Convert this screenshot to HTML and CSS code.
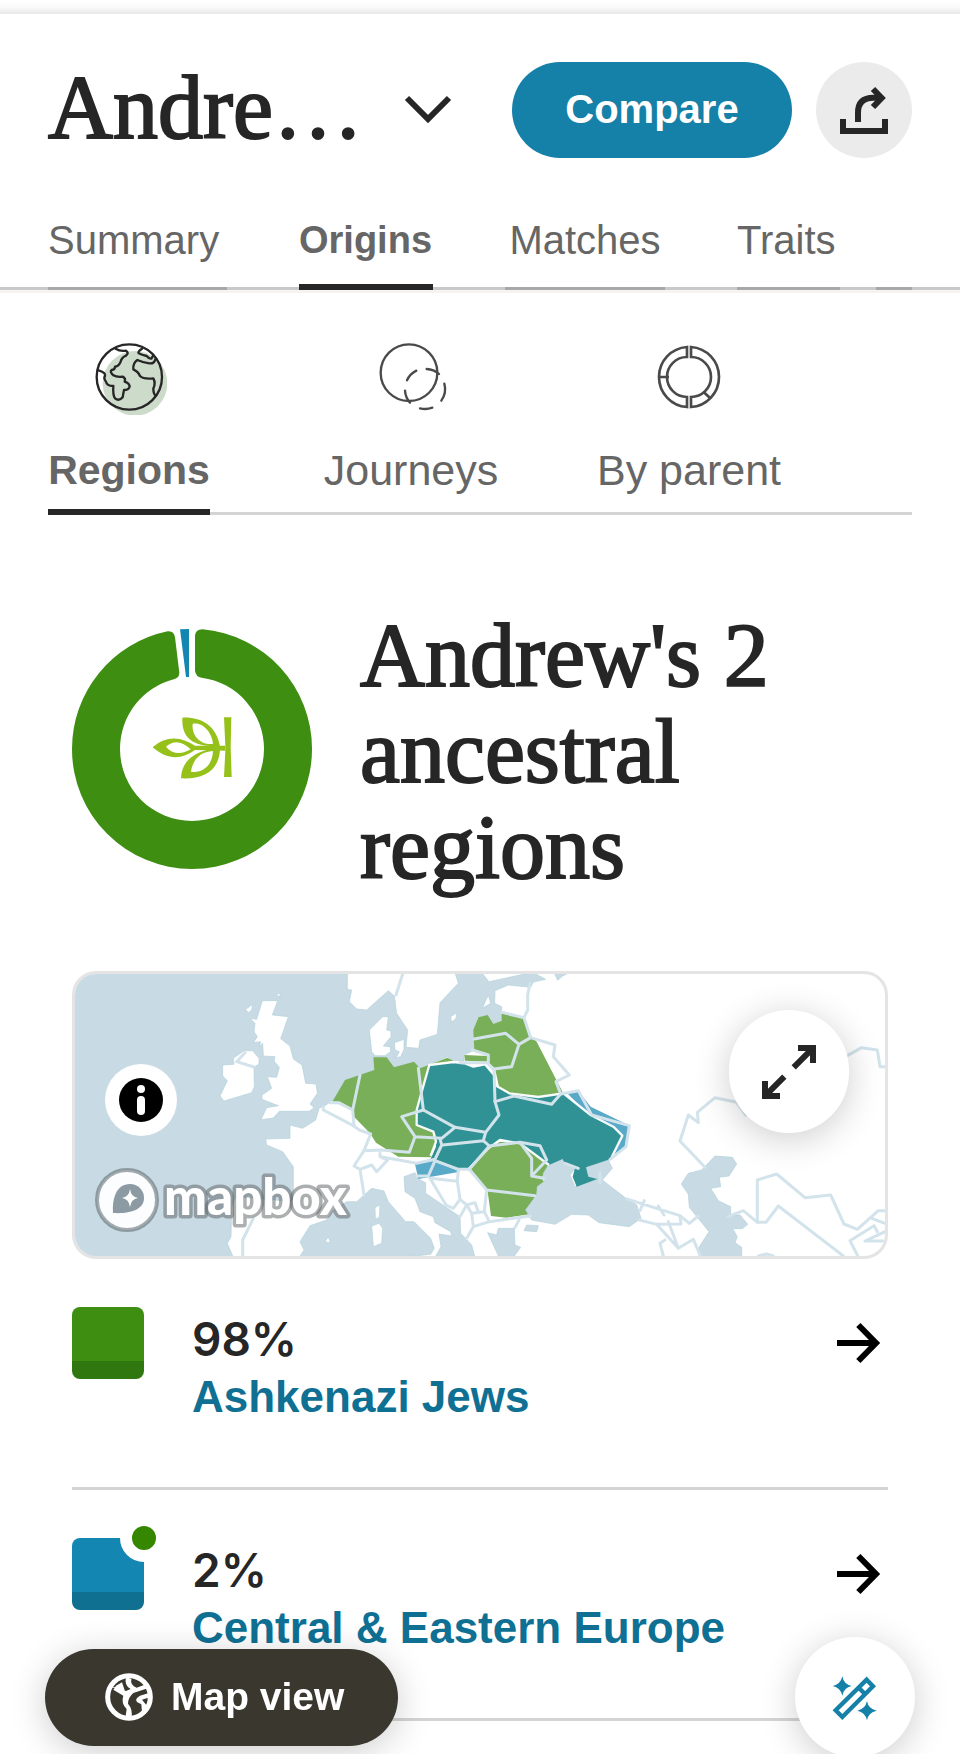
FILE: index.html
```html
<!DOCTYPE html>
<html lang="en">
<head>
  <meta charset="UTF-8" />
  <meta name="viewport" content="width=device-width, initial-scale=1.0" />
  <title>DNA Origins</title>
  <link rel="stylesheet" href="styles.css">
</head>
<body>
  <div class="top-shade"></div>

  <header class="header">
    <h1 class="title">Andre…</h1>
    <button class="switch-btn" type="button" aria-label="Switch test">
      <svg width="48" height="48" viewBox="1212 258 144 144" fill="none" stroke="#262626" stroke-width="18">
        <path d="M1221 294L1284 357L1347 294" />
      </svg>
    </button>
    <button class="compare-btn" type="button">Compare</button>
    <button class="share-btn" type="button" aria-label="Share">
      <svg width="48" height="48" viewBox="1080 258 144 144" fill="none" stroke="#262626" stroke-width="18">
        <path d="M1089 357V393H1215V357" />
        <path d="M1134 366V338Q1134 293 1180 293H1205" />
        <path d="M1179 267L1205 294L1179 321" />
      </svg>
    </button>
  </header>

  <nav class="tabs">
    <a href="#" class="tab tab-summary">Summary</a>
    <a href="#" class="tab tab-origins active">Origins</a>
    <a href="#" class="tab tab-matches">Matches</a>
    <a href="#" class="tab tab-traits">Traits</a>
    <a href="#" class="tab tab-more" aria-label="More"></a>
  </nav>

  <nav class="subtabs">
    <a href="#" class="subtab subtab-regions active">
      <svg width="76" height="72" viewBox="273 129 228 216" fill="none" stroke="#262626" stroke-width="7" stroke-linecap="round" stroke-linejoin="round">
        <circle cx="405" cy="250" r="97" fill="#cddcca" stroke="none" />
        <circle cx="388" cy="231" r="98" />
        <path d="M347 146Q360 155 378 152Q388 158 378 167Q365 172 362 185Q355 200 345 200Q345 209 335 210Q328 215 340 226Q350 232 368 230Q378 235 374 245Q392 252 388 262Q385 270 372 270Q370 280 368 292Q357 305 345 295Q338 285 340 258Q320 258 318 245Q310 235 315 228Q318 218 296 211" />
        <path d="M426 146Q412 155 416 160Q425 165 440 168Q448 178 455 175L460 165" />
        <path d="M466 178Q462 192 448 190Q430 188 412 180Q398 190 400 208Q415 215 420 228Q430 238 460 235Q468 250 460 265Q460 280 465 285" />
      </svg>
      <span>Regions</span>
    </a>
    <a href="#" class="subtab subtab-journeys">
      <svg width="76" height="72" viewBox="1119 129 228 216" fill="none" stroke="#4a4a4a" stroke-width="7" stroke-linecap="round">
        <circle cx="1227" cy="218" r="85" />
        <path d="M1221 241A60 60 0 0 1 1249 212M1280 207A60 60 0 0 1 1317 222M1333 251A60 60 0 0 1 1324 302M1297 323A60 60 0 0 1 1260 325M1230 308A60 60 0 0 1 1215 272" />
      </svg>
      <span>Journeys</span>
    </a>
    <a href="#" class="subtab subtab-parent">
      <svg width="76" height="72" viewBox="513 129 228 216" fill="none" stroke="#4a4a4a" stroke-width="8">
        <path d="M621 141A90 90 0 0 0 537 231A90 90 0 0 0 621 321V291A60 60 0 0 1 621 171Z" />
        <path d="M633 141A90 90 0 0 1 717 231A90 90 0 0 1 633 321V291A60 60 0 0 0 633 171Z" />
        <path d="M535 231H567M670 275L691 295" />
      </svg>
      <span>By parent</span>
    </a>
  </nav>

  <main class="content">
    <section class="summary">
      <svg class="donut" viewBox="96 87 720 720">
        <path fill="#3d8e11" d="M465 108Q466 88 487 88A360 360 0 0 1 816 447A360 360 0 0 1 456 807A360 360 0 0 1 96 447A360 360 0 0 1 383 94Q402 92 405 112L418 218Q418 232 404 237A216 216 0 0 0 240 447A216 216 0 0 0 456 663A216 216 0 0 0 672 447A216 216 0 0 0 485 233Q467 230 465 212Z" />
        <path fill="#1387b2" d="M420 88L447 87V231H438Z" />
        <g fill="#95c11a" fill-rule="evenodd">
          <path d="M552 352H574L572 440L575 531H552L556 452V438Z" />
          <path d="M427 353C480 350 530 375 540 440L500 437C445 430 425 400 427 353ZM458 371C490 365 517 400 519 432C480 436 454 405 458 371Z" />
          <path d="M338 442C380 405 425 410 465 437H556V452L465 450C425 480 380 480 338 442ZM378 440C400 420 425 422 452 448C425 465 395 462 378 440Z" />
          <path d="M423 535C490 538 535 515 540 450L500 450C450 465 425 490 423 535ZM453 515C490 520 517 495 519 453C480 455 458 480 453 515Z" />
        </g>
      </svg>
      <h2 class="heading">Andrew's 2 ancestral regions</h2>
    </section>

    <div class="map">
      <svg class="map-canvas" viewBox="45 42 2430 846" preserveAspectRatio="xMidYMid slice">
        <rect x="45" y="42" width="2430" height="846" fill="#c8dae3" />

        <!-- land -->
        <g fill="#fff" stroke="#b3d2dc" stroke-width="2">
          <path d="M1265 38L1287 65L1380 45L1420 38L1457 58L1420 66L1412 82L1345 75L1305 92L1304 130L1325 140L1325 180L1300 192L1282 165L1252 172L1241 210L1243 270L1212 285V303H1182L1162 290L1110 312L1080 325L1062 305L1002 322L980 292H940L943 330L855 360L820 420L790 440L778 443L767 480L728 505L690 495V535L617 537L620 555L668 575L700 620V725L560 712L525 715L515 740L513 830L502 850L520 892H2480V38Z" />
          <path d="M607 122H653L637 165L685 170L662 236L690 258L700 297L726 315L737 370L768 372L772 400L750 432L762 443L748 454H658L640 474L603 479L620 443L655 437L606 418V405L635 385L622 350L650 352L658 322L642 303L645 290L610 288L608 250L598 258L602 245L580 248L592 230L582 215L585 190L570 175L590 178Z" />
          <path d="M552 272H578L597 295V312L582 322L583 380L575 398L492 423L480 408L502 362L488 348V315L522 313L520 295Z" />
          <path d="M649 101H661L658 112ZM578 133L575 150L565 158L557 148Z" />
          <path d="M852 38L862 42V88L875 90L868 125L890 147L920 150L985 92L1003 108L1010 160L1043 210L1038 262L1076 265L1080 240L1132 223L1140 128L1195 70L1185 38Z" />
          <path d="M968 170H985L980 210L993 213V230L970 258L990 260L992 275L975 287H945L935 275L928 210Z" />
          <path d="M1003 248L1032 238V268L1022 290L1008 293L1018 275L1005 270Z" />
          <path d="M1172 170L1190 158L1188 175L1175 187ZM1267 145L1285 105L1292 130Z" />
        </g>

        <!-- inland seas -->
        <g fill="#c8dae3" stroke="#b3d2dc" stroke-width="2">
          <path d="M718 892L732 870L720 845L750 797L800 780L820 750L860 725L890 725L935 685L972 693L985 725L1037 785H1062L1112 835L1123 865L1112 883L1030 892Z" />
          <path d="M1032 650L1065 638L1075 657L1097 668V700L1200 770L1202 820L1235 855L1245 892H1125L1143 860L1137 822L1175 828L1172 815L1125 788L1120 770L1080 755L1065 715L1035 695Z" />
          <path d="M1283 818L1310 825L1315 805H1363L1365 855L1382 862L1360 892H1317Z" />
          <path d="M1400 795L1435 797L1430 815L1392 812Z" />
          <path d="M1483 40H1523L1508 48L1493 61Z" />
          <path d="M1965 588L2017 592L2030 612L2007 648L1978 652L1982 680L1952 685L1975 722L2012 740V765H2040L2063 793L2047 806H2018L2032 830L2025 848L2045 862V892H1917V862L1947 815L1888 742L1885 703L1864 672L1885 640L1925 630Z" />
        </g>
        <g fill="#fff" stroke="#b3d2dc" stroke-width="2">
          <path d="M945 742L960 735L958 772L946 778ZM935 798L957 790L968 805L965 850L940 860ZM795 845L805 830L811 848Z" />
        </g>

        <!-- ancestral regions -->
        <g>
          <path fill="#79af59" d="M817 425L855 360L943 330L940 292H980L1002 322L1062 305L1080 325L1162 293L1182 303L1105 315L1150 400L1130 545L1112 592L1015 590L948 548L930 520L882 470L880 447L840 425Z" />
          <path fill="#79af59" d="M1255 172L1283 165L1300 192L1325 182V160L1390 175L1415 230L1430 245L1508 397L1440 410L1350 400L1317 380L1305 325L1283 305L1215 302L1213 285L1280 288L1243 270L1240 210Z" />
          <path fill="#79af59" d="M1320 545L1380 552L1410 570L1467 618L1452 640L1445 655L1452 665L1432 680L1430 705L1397 750L1412 762L1340 773L1293 768L1283 695L1228 628L1285 565Z" />
          <path fill="#59a9c8" d="M1065 612L1130 600L1200 635L1075 657ZM1520 398L1555 392L1592 440L1705 495L1698 560L1655 592L1685 525L1592 470Z" />
        </g>
        <path fill="#c8dae3" stroke="#b3d2dc" stroke-width="2" d="M1465 615L1510 597L1522 615L1558 625L1540 632L1530 645L1545 680L1612 657L1585 650L1578 622L1645 600L1657 625L1627 660L1698 715L1730 735L1743 775L1708 800L1617 788L1585 765L1535 763L1485 793L1415 780L1397 750L1430 705L1432 680L1452 665L1450 640Z" />
        <path fill="#309294" d="M1108 315L1180 308L1215 310L1240 322L1275 315L1302 345L1310 380L1348 400L1435 411L1510 400L1592 465L1660 500L1687 527L1650 598L1578 622L1585 650L1612 657L1550 680L1538 650L1545 625L1515 612L1508 597L1467 615L1380 550L1320 540L1285 565L1225 628L1195 628L1110 600L1128 560L1127 520L1070 495V450L1088 385Z" />
        <path fill="none" stroke="#fff" stroke-opacity=".95" stroke-width="7" stroke-linejoin="round" d="M1467 615L1380 550L1320 540L1285 565L1225 628L1195 628L1120 600M1112 588L1128 545L1120 515L1070 495V450L1088 385L1108 315L1180 306L1215 310L1240 320L1275 313L1302 345L1310 378L1348 400L1435 411L1510 400L1592 465L1660 500L1687 527L1655 592" />

        <!-- borders -->
        <g fill="none" stroke="#d3e3eb" stroke-width="9" stroke-linecap="round" stroke-linejoin="round">
          <path d="M1028 42L1008 105M555 278L530 305L582 321M580 775L548 840V888" />
          <g transform="translate(780 0)">
            <path d="M120 345L98 450M10 440V450L100 497L118 510L152 522L132 572L182 570L268 577L285 530L245 470L310 450L405 502L365 535L285 530" />
            <path d="M30 428H55L98 450L102 497M132 572L102 618L120 628L155 615L170 635L203 600L180 590V580M120 628L132 705" />
            <path d="M182 590L290 610L345 598L365 555L360 535M295 325L310 450" />
            <path d="M405 502L497 517L490 542L368 555M490 542L508 558L448 628H415L345 602L325 648H290" />
            <path d="M497 517L537 465L525 425L522 330L502 308H420" />
            <path d="M462 237L557 220L597 253L575 320L522 327M457 270L505 285V305" />
            <path d="M597 253L632 233L705 255L700 290L748 345L708 365L722 402L695 433L582 408L525 425" />
            <path d="M545 157L612 173L632 233M612 173L623 150V105L630 70" />
            <path d="M722 402L775 392L815 465L928 497L918 560L870 598M735 610L775 625" />
            <path d="M508 558L600 547L660 557L680 600L638 645M600 547L635 595V648L672 655" />
            <path d="M448 628L500 690L645 707M500 690L493 755L455 760M493 755L508 785L460 800L440 835" />
            <path d="M415 630L412 664L330 655L378 735L400 745L420 718L412 664M420 718L440 735L420 770M440 735L465 728L475 755M440 735L455 760L460 800" />
            <path d="M508 785L632 768M597 780L585 803M840 637V670" />
          </g>
          <g transform="translate(1620 0)">
            <path d="M80 717L240 767L268 790L295 768M118 780L170 793L243 792L240 767M133 722L120 752M175 738L192 765" />
            <path d="M170 793L235 865L280 838L300 885M205 785L235 865M195 840L180 850L190 888" />
            <path d="M315 622L240 543L265 465L295 488L292 457L345 413L410 427L437 465" />
            <path d="M742 287L785 263L832 270L840 320H860" />
            <path d="M383 770L430 752L472 787V660L530 642L615 713L692 705L732 792L772 808L835 752H860" />
            <path d="M472 787H498L535 738L730 888M772 885L750 842L822 797L832 815M815 775L860 792M860 813L795 843H860M475 888L500 882L520 888" />
          </g>
        </g>
      </svg>

      <button class="info-btn" type="button" aria-label="About this map">
        <svg width="44" height="44" viewBox="0 0 44 44">
          <circle cx="22" cy="22" r="22" />
          <circle cx="22" cy="11" r="4" fill="#fff" />
          <path d="M22 22V33" stroke="#fff" stroke-width="8" stroke-linecap="round" />
        </svg>
      </button>

      <button class="expand-btn" type="button" aria-label="Expand map">
        <svg width="54" height="54" viewBox="0 0 162 162" fill="none" stroke="#262626" stroke-width="18">
          <path d="M108 9H153V54M149 13L95 67" />
          <path d="M9 108V153H54M13 149L67 95" />
        </svg>
      </button>

      <a href="#" class="mapbox-logo" aria-label="Mapbox homepage">
        <svg width="300" height="80" viewBox="0 -7 300 80">
          <circle cx="33" cy="33" r="30" fill="#fff" fill-opacity=".95" stroke="#5a666c" stroke-opacity=".55" stroke-width="4" />
          <path d="M19 46C18 32 22 17 36 17A14 14 0 0 1 50 31C50 43 35 47 19 46Z" fill="#8c9ba3" />
          <path d="M36 22Q37 30 44 31Q37 32 36 40Q35 32 28 31Q35 30 36 22Z" fill="#fff" />
          <text class="mapbox-word" x="70" y="48">mapbox</text>
        </svg>
      </a>
    </div>

    <ul class="regions">
      <li class="region">
        <div class="swatch swatch-green"></div>
        <div class="region-text">
          <div class="percent">98%</div>
          <a href="#" class="region-name">Ashkenazi Jews</a>
        </div>
        <svg class="arrow" width="54" height="48" viewBox="1062 150 162 144">
          <path d="M1071 222H1188M1135 168L1188 222L1135 276" />
        </svg>
      </li>
      <li class="region">
        <div class="swatch swatch-blue"><span class="badge"></span></div>
        <div class="region-text">
          <div class="percent">2%</div>
          <a href="#" class="region-name">Central &amp; Eastern Europe</a>
        </div>
        <svg class="arrow" width="54" height="48" viewBox="1062 150 162 144">
          <path d="M1071 222H1188M1135 168L1188 222L1135 276" />
        </svg>
      </li>
    </ul>
  </main>

  <button class="map-view-btn" type="button">
    <svg width="48" height="48" viewBox="195 522 144 144" fill="none" stroke="#fff">
      <circle cx="267" cy="594" r="64" stroke-width="15" />
      <path fill="#fff" stroke="none" d="M206 562L255 577L246 550L228 560L220 572L250 590Q242 612 260 630L256 658H274Q280 632 264 614Q264 596 280 582L328 566L318 556L290 566Q270 560 274 540L258 534Q252 560 272 570L258 576L210 560Z" />
      <path fill="#fff" stroke="none" d="M334 580L300 590Q282 600 292 610L304 616L306 640L322 622L306 602L322 597L334 606Z" />
    </svg>
    <span>Map view</span>
  </button>

  <button class="wand-btn" type="button" aria-label="Tools">
    <svg width="48" height="48" viewBox="1053 522 144 144" fill="none" stroke="#1580a8" stroke-width="13">
      <path d="M1160 542L1179 562L1087 654L1067 634ZM1136 566L1156 586" />
      <path fill="#1580a8" stroke="none" d="M1087 532Q1091 556 1115 561Q1091 566 1087 590Q1082 566 1058 561Q1082 556 1087 532ZM1161 606Q1165 630 1190 635Q1165 640 1161 664Q1156 640 1132 635Q1156 630 1161 606Z" />
    </svg>
  </button>
</body>
</html>
```
FILE: styles.css
```css
:root {
  --ink: #262626;
  --grey-text: #666;
  --blue: #1580a8;
  --link: #0f7093;
  --line: #d4d4d4;
}

* {
  box-sizing: border-box;
}

body {
  margin: 0;
  background: #fff;
  color: var(--ink);
  font-family: "Liberation Sans", Arial, sans-serif;
  font-size: 40px;
  line-height: 48px;
  overflow-x: hidden;
}

a {
  color: inherit;
  text-decoration: none;
}

button {
  display: flex;
  align-items: center;
  justify-content: center;
  padding: 0;
  border: none;
  font-family: inherit;
  cursor: pointer;
}

.top-shade {
  height: 14px;
  background: linear-gradient(#fff, #fafafa 50%, #e8e8e8);
}

/* Header */
.header {
  display: flex;
  gap: 24px;
  padding: 48px 48px 0;
}

.title {
  flex: 1;
  min-width: 0;
  margin: 0;
  font-family: "Liberation Serif", "Times New Roman", serif;
  font-size: 90px;
  font-weight: 400;
  line-height: 92px;
  white-space: nowrap;
  -webkit-text-stroke: 2px var(--ink);
}

.switch-btn {
  height: 96px;
  margin-right: 36px;
  background: none;
}

.compare-btn {
  width: 280px;
  height: 96px;
  padding-bottom: 2px;
  border-radius: 48px;
  background: var(--blue);
  color: #fff;
  font-size: 40px;
  font-weight: 700;
}

.share-btn {
  width: 96px;
  height: 96px;
  border-radius: 50%;
  background: #ebebeb;
}

/* Main tabs */
.tabs {
  display: flex;
  gap: 72px;
  padding: 58px 48px 0;
  color: var(--grey-text);
  box-shadow: inset 0 -3px #c9c9c9, 0 3px #f7f3f0;
}

.tab {
  padding: 0 0 23px;
  border-bottom: 3px solid #a8a8a8;
}

.tab.active {
  padding-bottom: 20px;
  border-bottom: 6px solid var(--ink);
  font-size: 38px;
  font-weight: 700;
}

.tab-summary {
  width: 179px;
}

.tab-origins {
  width: 134px;
}

.tab-matches {
  width: 160px;
  text-align: center;
}

.tab-traits {
  width: 103px;
}

.tab-more {
  width: 36px;
  margin-left: -36px;
}

/* Origins sub navigation */
.subtabs {
  display: flex;
  margin: 0 48px;
  padding-top: 53px;
  color: var(--grey-text);
  font-size: 43px;
  box-shadow: inset 0 -3px var(--line);
}

.subtab {
  display: flex;
  flex-direction: column;
  align-items: center;
  gap: 31px;
  padding-bottom: 21px;
}

.subtab.active {
  padding-bottom: 15px;
  border-bottom: 6px solid var(--ink);
  font-size: 41px;
  font-weight: 700;
}

.subtab-regions {
  width: 162px;
}

.subtab-journeys {
  width: 186px;
  margin: 0 86px 0 108px;
}

.subtab-parent {
  width: 198px;
}

/* Summary */
.content {
  padding: 93px 72px 0;
}

.summary {
  display: flex;
  gap: 48px;
}

.donut {
  flex: none;
  width: 240px;
  height: 240px;
  margin-top: 21px;
}

.heading {
  max-width: 480px;
  margin: 0;
  font-family: "Liberation Serif", "Times New Roman", serif;
  font-size: 90px;
  font-weight: 400;
  line-height: 96px;
  -webkit-text-stroke: 2px var(--ink);
}

/* Map */
.map {
  position: relative;
  margin-top: 75px;
  border: 3px solid #e4e4e4;
  border-radius: 24px;
  overflow: hidden;
}

.map-canvas {
  display: block;
  width: 100%;
  height: 282px;
}

.info-btn {
  position: absolute;
  top: 90px;
  left: 30px;
  width: 72px;
  height: 72px;
  border-radius: 50%;
  background: #fff;
}

.expand-btn {
  position: absolute;
  top: 36px;
  right: 36px;
  width: 120px;
  height: 123px;
  border-radius: 60px;
  background: #fff;
  box-shadow: 0 6px 36px rgba(0, 0, 0, 0.2);
}

.mapbox-logo {
  position: absolute;
  left: 19px;
  bottom: 16px;
}

.mapbox-logo svg {
  display: block;
}

.mapbox-word {
  font-family: Lato, sans-serif;
  font-size: 51px;
  font-weight: 900;
  fill: #fff;
  stroke: rgba(90, 95, 98, 0.5);
  stroke-width: 7px;
  stroke-linejoin: round;
  paint-order: stroke;
}

/* Region list */
.regions {
  margin: 0;
  padding: 0;
  list-style: none;
}

.region {
  display: flex;
  align-items: flex-start;
  height: 231px;
  padding-top: 48px;
  border-bottom: 3px solid var(--line);
}

.swatch {
  position: relative;
  flex: none;
  width: 72px;
  height: 72px;
  border-radius: 8px;
}

.swatch-green {
  background: linear-gradient(#3d8e11 54px, #31770f 54px);
}

.swatch-blue {
  background: linear-gradient(#1387b2 54px, #0f7092 54px);
}

.badge {
  position: absolute;
  top: -24px;
  right: -24px;
  width: 48px;
  height: 48px;
  border: 12px solid #fff;
  border-radius: 50%;
  background: #358700;
}

.region-text {
  flex: 1;
  padding: 4px 0 0 48px;
  font-size: 44px;
  line-height: 57px;
}

.percent {
  font-family: Inter, sans-serif;
  font-size: 46px;
  font-weight: 600;
}

.region-name {
  display: block;
  color: var(--link);
  font-weight: 700;
}

.arrow {
  flex: none;
  margin-top: 12px;
  fill: none;
  stroke: #000;
  stroke-width: 18px;
}

/* Floating buttons */
.map-view-btn {
  position: fixed;
  left: 45px;
  bottom: 8px;
  gap: 18px;
  height: 97px;
  padding: 0 54px 2px 60px;
  border-radius: 49px;
  background: #3a372f;
  color: #fff;
  font-size: 39px;
  font-weight: 700;
  box-shadow: 0 6px 36px rgba(0, 0, 0, 0.2);
}

.wand-btn {
  position: fixed;
  right: 45px;
  bottom: -3px;
  width: 120px;
  height: 120px;
  border-radius: 50%;
  background: #fff;
  box-shadow: 0 6px 36px rgba(0, 0, 0, 0.2);
}
```
